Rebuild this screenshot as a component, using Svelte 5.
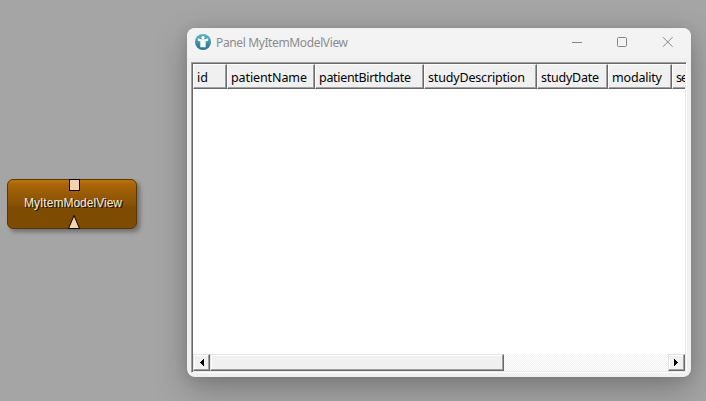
<script>
  const columns = [
    { name: 'id', width: 34, text: 11 },
    { name: 'patientName', width: 88, text: 76 },
    { name: 'patientBirthdate', width: 109, text: 92 },
    { name: 'studyDescription', width: 113, text: 97 },
    { name: 'studyDate', width: 71, text: 58 },
    { name: 'modality', width: 64, text: 50 },
    { name: 'se', width: 40, text: 12 }
  ];
</script>

<main class="network">
  <div class="module">
    <svg class="ports" width="130" height="50" viewBox="0 0 130 50">
      <rect x="62.5" y=".5" width="10" height="11" fill="#f5d3ad" stroke="#000" />
      <path d="M61.5 49.5 67 36.5 72.5 49.5Z" fill="#f5d3ad" stroke="#000" />
      <text class="shade" x="18.3" y="29.3" textLength="98">MyItemModelView</text>
      <text class="label" x="17" y="28" textLength="98">MyItemModelView</text>
    </svg>
  </div>

  <section class="window">
    <header>
      <svg class="logo" width="16" height="16" viewBox="0 0 16 16">
        <defs>
          <linearGradient id="globe" x1="0" y1="0" x2="0" y2="1">
            <stop offset="0" stop-color="#5cb3c1" /><stop offset="1" stop-color="#2c718f" />
          </linearGradient>
        </defs>
        <circle cx="8" cy="8" r="8" fill="url(#globe)" />
        <circle cx="8" cy="3.6" r="1.6" fill="#fff" />
        <path d="M2.8 4.3 6.3 5.3H9.7L13.2 4.3V6.8L10.7 7.6V13.3H5.3V7.6L2.8 6.8Z" fill="#f5fafb" />
      </svg>
      <svg class="title" width="140" height="20"><text x="0" y="14" textLength="132">Panel MyItemModelView</text></svg>
      <svg class="controls" width="104" height="12" viewBox="0 0 104 12" fill="none" stroke="#858585">
        <path d="M0 6.5H10" /><rect x="45.5" y="1.5" width="9" height="9" rx="1" />
        <path d="M91 1.2 100.5 10.7M100.5 1.2 91 10.7" />
      </svg>
    </header>

    <div class="view">
      <div class="columns">
        {#each columns as column}
          <div class="cell" style:width="{column.width}px">
            <svg width={column.text + 2} height="20"><text x="0" y="14" textLength={column.text}>{column.name}</text></svg>
          </div>
        {/each}
      </div>
      <div class="body"></div>
      <div class="scroll">
        <div class="button"><svg width="5" height="8" viewBox="0 0 5 8" shape-rendering="crispEdges"><path d="M4 0h1v7H4zM3 1h1v5H3zM2 2h1v3H2zM1 3h1v1H1z" /></svg></div>
        <div class="thumb"></div>
        <div class="track"></div>
        <div class="button"><svg width="5" height="8" viewBox="0 0 5 8" shape-rendering="crispEdges"><path d="M0 0h1v7H0zM1 1h1v5H1zM2 2h1v3H2zM3 3h1v1H3z" /></svg></div>
      </div>
    </div>
  </section>
</main>

<style>
  :global(body) { margin: 0; overflow: hidden; }
  .network { position: relative; width: 706px; height: 401px; background: #a5a5a5; overflow: hidden; }
  .module {
    position: absolute; left: 7px; top: 179px; width: 130px; height: 50px; box-sizing: border-box;
    border: 1px solid #5a3700; border-radius: 6px;
    background: linear-gradient(#bd7308 0, #a9650a 5px, #965a05 15px, #895104 25px, #7e4b03 27px, #7e4b03);
    box-shadow: 3px 3px 4px rgba(0, 0, 0, .33);
  }
  .ports { display: block; margin: -1px; overflow: visible; font: 12px "Liberation Sans", Arial, sans-serif; }
  .shade { fill: #000; fill-opacity: .75; }
  .label { fill: #f3eadc; }
  .window {
    position: absolute; left: 187px; top: 28px; width: 504px; height: 349px; box-sizing: border-box;
    padding: 0 4px 4px; display: flex; flex-direction: column;
    background: #f0f0f0; border-radius: 8px; overflow: hidden;
    box-shadow: 0 0 1px #777, 0 12px 34px rgba(0, 0, 0, .25), 0 2px 14px rgba(0, 0, 0, .1);
  }
  header { height: 30px; margin: 0 -4px 4px; padding: 0 15px 0 8px; display: flex; align-items: center; background: #f3f3f3; }
  .logo { margin-right: 5px; margin-top: -2px; }
  .title { flex: 1; font: 12px "Noto Sans", sans-serif; fill: #8b8b8b; }
  .controls { margin-top: -2px; }
  .view {
    height: 311px; box-sizing: border-box; display: flex; flex-direction: column; overflow: hidden;
    border: 1px solid; border-color: #a0a0a0 #fff #fff #a0a0a0; background: #fff;
    box-shadow: inset 1px 1px #696969, inset -1px -1px #e8e8e8; padding: 1px;
  }
  .columns { display: flex; height: 25px; flex: none; overflow: hidden; }
  .cell {
    box-sizing: border-box; flex: none; padding: 3px 0 0 3px; background: #f0f0f0; overflow: hidden;
    border: 1px solid; border-color: #fff #696969 #696969 #fff; box-shadow: inset -1px -1px #a0a0a0;
  }
  .cell svg { display: block; font: 12.5px "Noto Sans", sans-serif; fill: #000; }
  .body { flex: 1; background: #fff; }
  .scroll { display: flex; height: 17px; flex: none; }
  .button, .thumb {
    box-sizing: border-box; background: #f0f0f0; border: 1px solid;
    border-color: #e3e3e3 #696969 #696969 #e3e3e3; box-shadow: inset -1px -1px #a0a0a0, inset 1px 1px #fff;
  }
  .button { width: 17px; display: flex; align-items: center; justify-content: center; }
  .thumb { width: 294px; }
  .track { flex: 1; background: repeating-conic-gradient(#f0f0f0 0 25%, #fff 0 50%) 0 0 / 2px 2px; }
</style>
